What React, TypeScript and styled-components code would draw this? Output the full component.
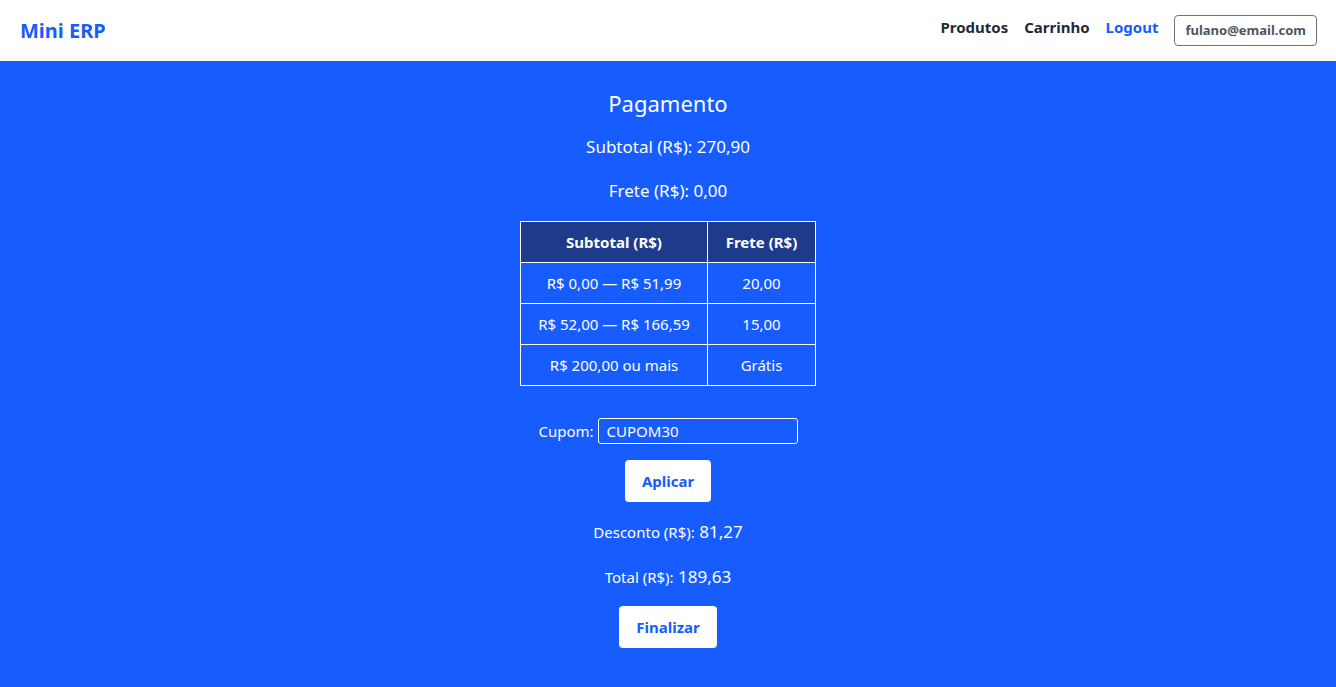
import React, { useState } from 'react';
import styled, { createGlobalStyle } from 'styled-components';

const GlobalStyle = createGlobalStyle`
  * { box-sizing: border-box; }
  html, body {
    margin: 0;
    padding: 0;
    background: #165cff;
    font-family: "Noto Sans", "Open Sans", sans-serif;
  }
`;

const Page = styled.div`
  min-height: 687px;
  display: flex;
  flex-direction: column;
`;

const TopBar = styled.header`
  height: 61px;
  background: #ffffff;
  display: flex;
  align-items: center;
  justify-content: space-between;
  padding: 0 19px 0 20px;
`;

const Brand = styled.div`
  font-size: 20px;
  font-weight: 700;
  color: #165cff;
`;

const Nav = styled.nav`
  display: flex;
  align-items: center;
  gap: 16px;
`;

const NavLink = styled.a<{ $accent?: boolean }>`
  font-size: 15px;
  font-weight: 700;
  color: ${(p) => (p.$accent ? '#165cff' : '#1f2937')};
  text-decoration: none;
  cursor: pointer;
  margin-top: -7px;
`;

const UserBadge = styled.div`
  border: 1px solid #6b7280;
  border-radius: 4px;
  padding: 5px 10px 6px;
  font-size: 13px;
  font-weight: 700;
  color: #4b5563;
`;

const Main = styled.main`
  flex: 1;
  display: flex;
  flex-direction: column;
  align-items: center;
  color: #ffffff;
  padding-top: 26px;
`;

const Title = styled.h1`
  margin: 0;
  font-size: 22px;
  font-weight: 400;
  line-height: 32px;
`;

const Line = styled.p<{ $gap?: number }>`
  margin: ${(p) => p.$gap ?? 12}px 0 0;
  font-size: 17px;
  line-height: 32px;
`;

const Small = styled.span`
  font-size: 15px;
`;

const Table = styled.table`
  margin-top: 14px;
  border-collapse: collapse;
  font-size: 15px;
`;

const Th = styled.th<{ $w: number }>`
  width: ${(p) => p.$w}px;
  height: 41px;
  border: 1px solid #ffffff;
  background: #1e3a8a;
  font-weight: 700;
  text-align: center;
`;

const Td = styled.td`
  height: 41px;
  border: 1px solid #ffffff;
  text-align: center;
`;

const CouponRow = styled.label`
  margin-top: 32px;
  display: flex;
  align-items: center;
  gap: 4px;
  font-size: 15px;
`;

const CouponInput = styled.input`
  width: 200px;
  height: 26px;
  border: 1px solid #ffffff;
  border-radius: 3px;
  background: transparent;
  color: #ffffff;
  font-family: inherit;
  font-size: 15px;
  padding: 0 8px;
  outline: none;
`;

const Button = styled.button<{ $mt: number }>`
  margin-top: ${(p) => p.$mt}px;
  height: 42px;
  padding: 0 17px;
  border: none;
  border-radius: 4px;
  background: #ffffff;
  color: #165cff;
  font-family: inherit;
  font-size: 15px;
  font-weight: 700;
  cursor: pointer;
`;

const ranges = [
  { range: 'R$ 0,00 — R$ 51,99', fee: '20,00' },
  { range: 'R$ 52,00 — R$ 166,59', fee: '15,00' },
  { range: 'R$ 200,00 ou mais', fee: 'Grátis' },
];

export default function App() {
  const [coupon, setCoupon] = useState('CUPOM30');

  return (
    <Page>
      <GlobalStyle />
      <TopBar>
        <Brand>Mini ERP</Brand>
        <Nav>
          <NavLink>Produtos</NavLink>
          <NavLink>Carrinho</NavLink>
          <NavLink $accent>Logout</NavLink>
          <UserBadge>fulano@email.com</UserBadge>
        </Nav>
      </TopBar>
      <Main>
        <Title>Pagamento</Title>
        <Line>Subtotal (R$): 270,90</Line>
        <Line>Frete (R$): 0,00</Line>
        <Table>
          <thead>
            <tr>
              <Th $w={187}>Subtotal (R$)</Th>
              <Th $w={108}>Frete (R$)</Th>
            </tr>
          </thead>
          <tbody>
            {ranges.map((r) => (
              <tr key={r.range}>
                <Td>{r.range}</Td>
                <Td>{r.fee}</Td>
              </tr>
            ))}
          </tbody>
        </Table>
        <CouponRow>
          Cupom:
          <CouponInput value={coupon} onChange={(e) => setCoupon(e.target.value)} />
        </CouponRow>
        <Button $mt={16}>Aplicar</Button>
        <Line $gap={14}>
          <Small>Desconto (R$):</Small> 81,27
        </Line>
        <Line $gap={13}>
          <Small>Total (R$):</Small> 189,63
        </Line>
        <Button $mt={13}>Finalizar</Button>
      </Main>
    </Page>
  );
}
